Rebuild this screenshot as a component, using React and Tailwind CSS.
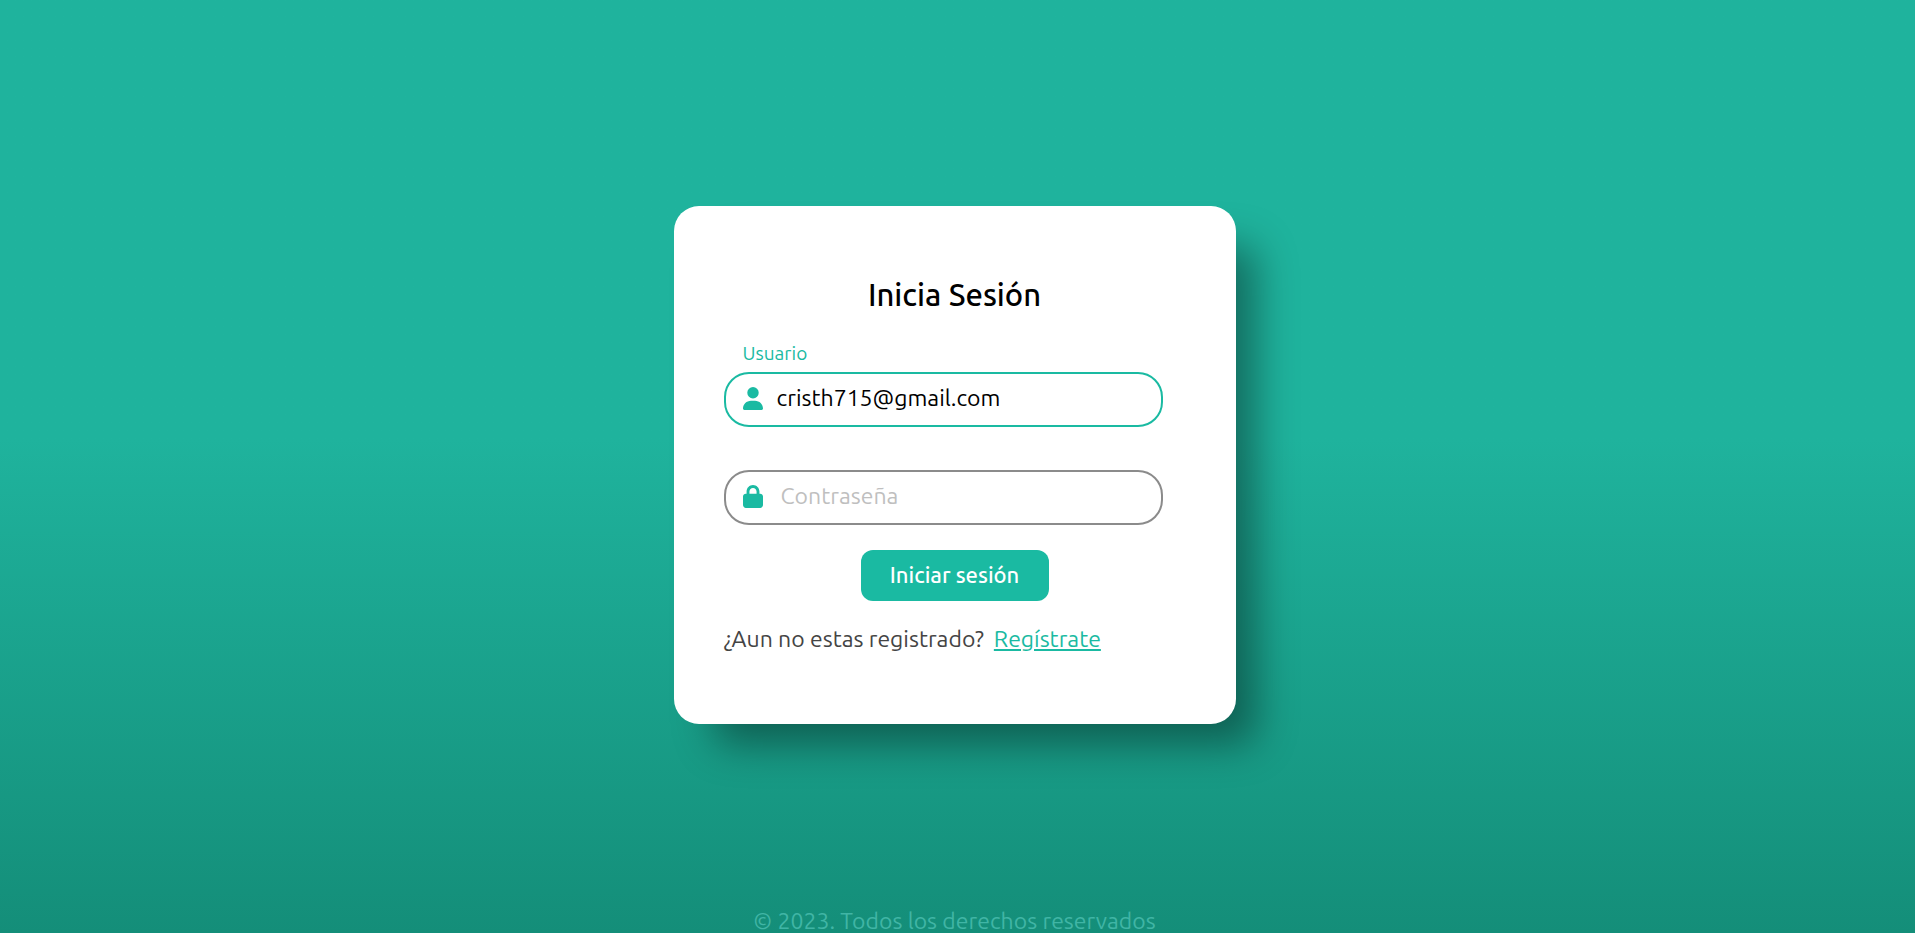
import { useState } from "react";
import { FaLock, FaUser } from "react-icons/fa6";

export default function App() {
  const [user, setUser] = useState("cristh715@gmail.com");
  const [password, setPassword] = useState("");

  return (
    <div className="flex h-screen flex-col items-center overflow-hidden bg-linear-to-b from-[#1FB39D] from-47% to-[#148E79] pr-1.5 font-['Ubuntu','Noto_Sans',sans-serif] text-[23px] leading-7">
      <main className="flex w-full flex-1 items-center justify-center pt-5">
        <form
          className="w-full max-w-[562px] rounded-[25px] bg-white px-[50px] py-[71px] shadow-[30px_30px_40px_-10px_rgba(0,0,0,0.4)]"
          onSubmit={(event) => event.preventDefault()}
        >
          <h1 className="text-center text-[31px] leading-9 font-medium text-black">Inicia Sesión</h1>

          <div className="mr-[23px] flex flex-col pt-7">
            <label htmlFor="user" className="pb-[7px] pl-[19px] text-[19px] leading-6 text-[#1ABAA2]">
              Usuario
            </label>
            <div className="flex h-[55px] items-center gap-[14px] rounded-[25px] border-2 border-[#1ABAA2] px-[17px] pb-0.5">
              <FaUser className="h-[23px] w-5 shrink-0 text-[#1ABAA2]" aria-hidden="true" />
              <input
                id="user"
                type="text"
                value={user}
                onChange={(event) => setUser(event.target.value)}
                className="min-w-0 flex-1 text-black outline-none"
              />
            </div>
          </div>

          <div className="mt-[43px] mr-[23px] flex h-[55px] items-center gap-[18px] rounded-[25px] border-2 border-[#8B8B8B] px-[17px] pb-0.5">
            <FaLock className="h-[23px] w-5 shrink-0 text-[#1ABAA2]" aria-hidden="true" />
            <input
              id="password"
              type="password"
              aria-label="Contraseña"
              placeholder="Contraseña"
              value={password}
              onChange={(event) => setPassword(event.target.value)}
              className="min-w-0 flex-1 text-black outline-none placeholder:text-[#BFBFBF]"
            />
          </div>

          <div className="mt-[25px] flex justify-center">
            <button
              type="submit"
              className="h-[51px] w-[188px] rounded-xl bg-[#1ABAA2] text-[22px] font-medium text-white"
            >
              Iniciar sesión
            </button>
          </div>

          <p className="mt-6 flex gap-[10px] text-[#444444]">
            ¿Aun no estas registrado?
            <a href="#registro" className="text-[#1ABAA2] underline">
              Regístrate
            </a>
          </p>
        </form>
      </main>
      <footer className="leading-6 text-[#40B5A5]">© 2023. Todos los derechos reservados</footer>
    </div>
  );
}
